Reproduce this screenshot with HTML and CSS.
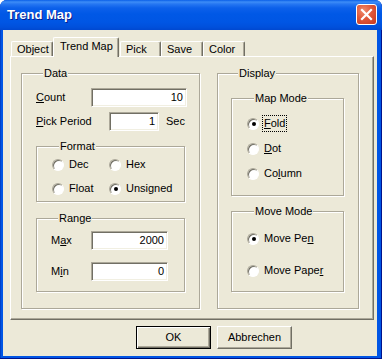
FILE: index.html
```html
<!DOCTYPE html>
<html>
<head>
<meta charset="utf-8">
<link rel="stylesheet" href="styles.css">
</head>
<body>
<div class="window">
  <div class="titlebar">
    <span class="title">Trend Map</span>
    <span class="close">
      <svg width="21" height="21" viewBox="0 0 21 21">
        <path d="M6 6 L15 15 M15 6 L6 15" stroke="#fff" stroke-width="2.2" stroke-linecap="square"/>
      </svg>
    </span>
  </div>
  <div class="client">
    <div class="tabs">
      <div class="tab w-object">Object</div>
      <div class="tab active w-trend">Trend Map</div>
      <div class="tab w-pick">Pick</div>
      <div class="tab w-save">Save</div>
      <div class="tab w-color">Color</div>
    </div>
    <div class="panel">
      <div class="group data">
        <span class="gtitle">Data</span>
        <div class="row count-row">
          <span class="lbl w-count"><u>C</u>ount</span>
          <span class="edit w-edit-count">10</span>
        </div>
        <div class="row pick-row">
          <span class="lbl w-pick-lbl"><u>P</u>ick Period</span>
          <span class="edit w-edit-pick">1</span>
          <span class="unit">Sec</span>
        </div>
        <div class="group format">
          <span class="gtitle">Format</span>
          <div class="radio-grid">
            <span class="opt"><span class="radio"></span>Dec</span>
            <span class="opt"><span class="radio"></span>Hex</span>
            <span class="opt"><span class="radio"></span>Float</span>
            <span class="opt"><span class="radio checked"></span>Unsigned</span>
          </div>
        </div>
        <div class="group range">
          <span class="gtitle">Range</span>
          <div class="row max-row">
            <span class="lbl w-range">M<u>a</u>x</span>
            <span class="edit w-edit-range">2000</span>
          </div>
          <div class="row min-row">
            <span class="lbl w-range">M<u>i</u>n</span>
            <span class="edit w-edit-range">0</span>
          </div>
        </div>
      </div>
      <div class="group display">
        <span class="gtitle">Display</span>
        <div class="group mapmode">
          <span class="gtitle">Map Mode</span>
          <div class="radio-col map-col">
            <span class="opt"><span class="radio checked"></span><span class="focus"><u>F</u>old</span></span>
            <span class="opt"><span class="radio"></span><u>D</u>ot</span>
            <span class="opt"><span class="radio"></span>Co<u>l</u>umn</span>
          </div>
        </div>
        <div class="group movemode">
          <span class="gtitle">Move Mode</span>
          <div class="radio-col move-col">
            <span class="opt"><span class="radio checked"></span>Move Pe<u>n</u></span>
            <span class="opt"><span class="radio"></span>Move Pape<u>r</u></span>
          </div>
        </div>
      </div>
    </div>
    <div class="buttons">
      <span class="btn default">OK</span>
      <span class="btn">Abbrechen</span>
    </div>
  </div>
</div>
</body>
</html>
```
FILE: styles.css
```css
html, body {
  margin: 0;
  padding: 0;
  background: #ffffff;
}
body {
  width: 382px;
  height: 359px;
  overflow: hidden;
  font-family: "Liberation Sans", Arial, sans-serif;
  font-size: 11px;
  line-height: 13px;
  color: #000;
}
.window {
  width: 382px;
  height: 359px;
  box-sizing: border-box;
  display: flex;
  flex-direction: column;
  background: #0055E5;
  border-radius: 7px 7px 0 0;
  box-shadow: inset -1px -1px 0 #00138C, inset 1px 0 0 #0040C8;
}
.titlebar {
  height: 30px;
  flex: none;
  display: flex;
  align-items: center;
  justify-content: space-between;
  padding: 0 5px 0 7px;
  border-radius: 7px 7px 0 0;
  background: linear-gradient(to bottom, #0A5FE8 0px, #3D8DF7 2px, #2677F2 4px, #0C60EA 8px, #0058E6 14px, #0056E4 22px, #0050DC 27px, #0048D0 30px);
}
.title {
  color: #fff;
  font-weight: bold;
  font-size: 13px;
  line-height: 16px;
  text-shadow: 1px 1px 0 #0A1E8C;
  margin-top: -1px;
}
.close {
  width: 21px;
  height: 21px;
  box-sizing: border-box;
  border: 1px solid #fff;
  border-radius: 3px;
  background: radial-gradient(circle at 35% 30%, #F08C6E 0%, #E0583A 45%, #C8381E 100%);
  display: flex;
  margin-top: -1px;
}
.close svg {
  margin: -1px;
}
.client {
  flex: 1;
  margin: 0 5px 3px 3px;
  background: #ECE9D8;
  display: flex;
  flex-direction: column;
}
.tabs {
  display: flex;
  align-items: flex-end;
  padding-left: 8px;
  margin-top: 7px;
  height: 19px;
  position: relative;
  z-index: 1;
}
.tab {
  box-sizing: border-box;
  height: 15px;
  text-align: left;
  padding-left: 5px;
  border-top: 1px solid #fff;
  border-left: 1px solid #fff;
  border-right: 1px solid #716F64;
  border-radius: 2px 2px 0 0;
  box-shadow: inset -1px 0 0 #ACA899;
  background: #ECE9D8;
  padding-top: 1px;
}
.tab.active {
  height: 20px;
  margin-bottom: -1px;
  padding-top: 2px;
  padding-left: 6px;
}
.w-object { width: 42px; }
.w-trend { width: 66px; }
.w-pick { width: 41px; margin-left: 1px; }
.w-save { width: 42px; }
.w-color { width: 42px; }
.panel {
  margin-left: 7px;
  width: 364px;
  height: 264px;
  box-sizing: border-box;
  border-top: 1px solid #fff;
  border-left: 1px solid #fff;
  border-right: 1px solid #716F64;
  border-bottom: 1px solid #716F64;
  box-shadow: inset -1px -1px 0 #ACA899;
  display: flex;
  align-items: flex-start;
  padding: 16px 0 0 10px;
  gap: 17px;
}
.group {
  box-sizing: border-box;
  border: 1px solid #ACA899;
  box-shadow: 1px 1px 0 #fff, inset 1px 1px 0 #fff;
  display: flex;
  flex-direction: column;
  align-items: flex-start;
}
.gtitle {
  margin: -7px 0 0 7px;
  padding: 0 1px;
  background: #ECE9D8;
  line-height: 13px;
  height: 13px;
}
.data {
  width: 179px;
  height: 236px;
  padding-left: 14px;
}
.row {
  display: flex;
  align-items: center;
  height: 19px;
}
.count-row { margin-top: 8px; }
.pick-row { margin-top: 5px; }
.lbl { display: block; }
.w-count { width: 55px; }
.w-pick-lbl { width: 73px; }
.w-range { width: 40px; }
.edit {
  box-sizing: border-box;
  height: 19px;
  background: #fff;
  border: 1px solid;
  border-color: #ACA899 #fff #fff #ACA899;
  box-shadow: inset 1px 1px 0 #716F64, inset -1px -1px 0 #F1EFE2;
  text-align: right;
  padding: 2px 3px 0 0;
}
.w-edit-count { width: 96px; }
.w-edit-pick { width: 50px; }
.w-edit-range { width: 77px; }
.unit { margin-left: 7px; }
.format {
  margin-top: 15px;
  width: 149px;
  height: 56px;
  padding-left: 15px;
}
.radio-grid {
  display: grid;
  grid-template-columns: 57px auto;
  row-gap: 11px;
  margin-top: 5px;
}
.opt {
  display: flex;
  align-items: center;
  height: 13px;
  white-space: nowrap;
}
.radio {
  width: 12px;
  height: 12px;
  box-sizing: border-box;
  border-radius: 50%;
  background: #fff;
  border: 1px solid;
  border-color: #ACA899 #fff #fff #ACA899;
  box-shadow: inset 1px 1px 0 #716F64;
  margin-right: 5px;
  display: flex;
  align-items: center;
  justify-content: center;
  flex: none;
}
.radio.checked::after {
  content: "";
  width: 4px;
  height: 4px;
  border-radius: 50%;
  background: #000;
  margin: 1px 0 0 1px;
}
.range {
  margin-top: 16px;
  width: 149px;
  height: 74px;
  padding-left: 14px;
}
.max-row { margin-top: 6px; }
.min-row { margin-top: 12px; }
.display {
  width: 142px;
  height: 236px;
  padding-left: 13px;
}
.mapmode {
  margin-top: 18px;
  width: 113px;
  height: 98px;
  padding-left: 15px;
}
.radio-col {
  display: flex;
  flex-direction: column;
}
.map-col { margin-top: 12px; gap: 12px; }
.movemode {
  margin-top: 15px;
  width: 113px;
  height: 81px;
  padding-left: 15px;
}
.move-col { margin-top: 14px; gap: 19px; }
.focus {
  outline: 1px dotted #000;
  outline-offset: 1px;
}
.buttons {
  display: flex;
  gap: 6px;
  margin: 6px 0 0 133px;
}
.btn {
  box-sizing: border-box;
  width: 75px;
  height: 23px;
  display: flex;
  align-items: center;
  justify-content: center;
  border: 1px solid;
  border-color: #fff #716F64 #716F64 #fff;
  box-shadow: inset -1px -1px 0 #ACA899;
  background: #ECE9D8;
}
.btn.default {
  border: 1px solid #000;
  box-shadow: inset 1px 1px 0 #fff, inset -1px -1px 0 #716F64, inset -2px -2px 0 #ACA899;
}
```
